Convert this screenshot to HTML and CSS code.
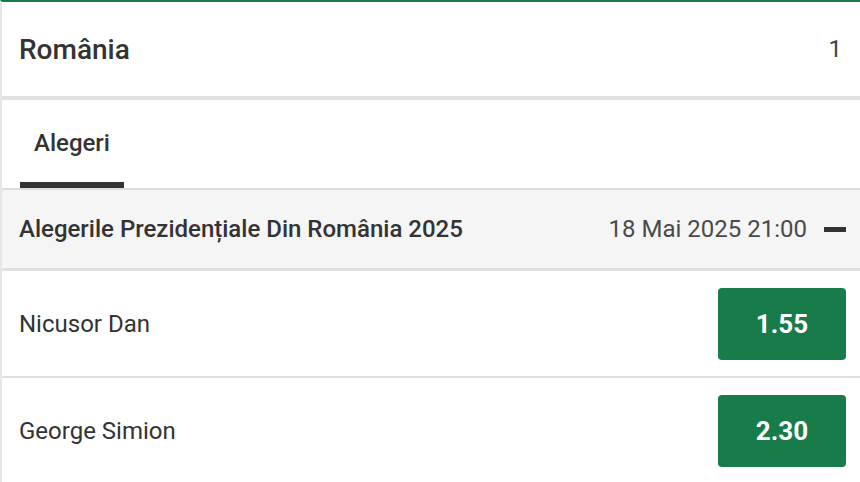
FILE: index.html
```html
<!DOCTYPE html>
<html lang="ro">
<head>
<meta charset="utf-8">
<title>România</title>
<link rel="stylesheet" href="styles.css">
</head>
<body>
<div class="panel">
  <div class="country">
    <span class="country-name">România</span>
    <span class="country-count">1</span>
  </div>
  <div class="tabs">
    <div class="tab tab-active">Alegeri</div>
  </div>
  <div class="event">
    <span class="event-title">Alegerile Prezidențiale Din România 2025</span>
    <span class="event-date">18 Mai 2025 21:00</span>
    <span class="collapse" aria-label="Restrânge"></span>
  </div>
  <div class="row">
    <span class="runner">Nicusor Dan</span>
    <button class="odds">1.55</button>
  </div>
  <div class="row">
    <span class="runner">George Simion</span>
    <button class="odds">2.30</button>
  </div>
</div>
</body>
</html>
```

FILE: styles.css
```css
html, body {
  margin: 0;
  padding: 0;
  background: #ffffff;
}
body {
  font-family: Roboto, "Liberation Sans", Arial, sans-serif;
  color: #333333;
  overflow: hidden;
}
.panel {
  border-top: 2px solid #1b7a48;
  border-left: 2px solid #e4e6e8;
}
.country {
  height: 94px;
  display: flex;
  align-items: center;
  justify-content: space-between;
  padding: 0 18px 0 17px;
  border-bottom: 4px solid #e1e1e1;
}
.country-name {
  font-size: 28px;
  font-weight: 500;
  color: #333333;
}
.country-count {
  font-size: 24px;
  color: #444444;
}
.tabs {
  height: 88px;
  display: flex;
  padding-left: 18px;
  border-bottom: 2px solid #dddddd;
}
.tab {
  display: flex;
  align-items: center;
  padding: 4px 14px 0;
  font-size: 24px;
  font-weight: 500;
  color: #333333;
  box-sizing: border-box;
}
.tab-active {
  border-bottom: 6px solid #333333;
}
.event {
  height: 78px;
  display: flex;
  align-items: center;
  padding: 0 14px 0 17px;
  background: #f5f5f5;
  border-bottom: 3px solid #e0e0e0;
}
.event-title {
  flex: 1;
  font-size: 24px;
  font-weight: 500;
  color: #333333;
}
.event-date {
  font-size: 24px;
  color: #4a4a4a;
  margin-right: 17px;
}
.collapse {
  width: 22px;
  height: 5px;
  background: #333333;
}
.row {
  height: 105px;
  display: flex;
  align-items: center;
  justify-content: space-between;
  padding: 0 14px 0 17px;
  border-bottom: 2px solid #e0e0e0;
}
.runner {
  font-size: 24px;
  color: #333333;
}
.odds {
  width: 128px;
  height: 72px;
  border: none;
  border-radius: 4px;
  background: #177b4a;
  color: #ffffff;
  font-family: Roboto, "Liberation Sans", Arial, sans-serif;
  font-size: 26px;
  font-weight: 700;
  padding: 0;
  margin-top: 1px;
}
```
